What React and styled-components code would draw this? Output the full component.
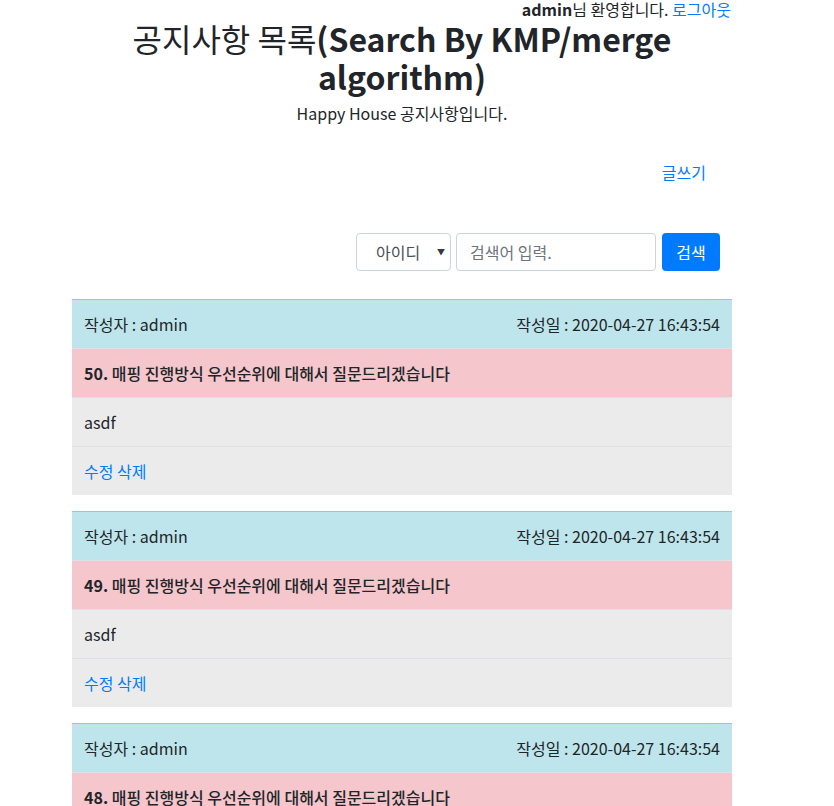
import styled, { createGlobalStyle } from "styled-components";

const GlobalStyle = createGlobalStyle`
  body {
    margin: 0;
    font-family: "Noto Sans CJK KR", "Noto Sans", sans-serif;
    font-size: 16px;
    line-height: 1.5;
    color: #212529;
    background: #ffffff;
  }
`;

const notices = [50, 49, 48];

const App = () => {
  return (
    <>
      <GlobalStyle />
      <Container>
        <TopBar>
          <b>admin</b>님 환영합니다. <Link href="#">로그아웃</Link>
        </TopBar>
        <Title>
          공지사항 목록<span>(Search By KMP/merge algorithm)</span>
        </Title>
        <Lead>Happy House 공지사항입니다.</Lead>
        <WriteRow>
          <Link href="#">글쓰기</Link>
        </WriteRow>
        <SearchForm>
          <Select>
            <span>아이디</span>
            <span className="arrow">▼</span>
          </Select>
          <Input placeholder="검색어 입력." />
          <Button>검색</Button>
        </SearchForm>
        {notices.map((no) => (
          <Table key={no}>
            <Row tone="info" first>
              <span>작성자 : admin</span>
              <span>작성일 : 2020-04-27 16:43:54</span>
            </Row>
            <Row tone="danger">
              <strong>
                <b>{no}.</b> 매핑 진행방식 우선순위에 대해서 질문드리겠습니다
              </strong>
            </Row>
            <Row tone="gray">asdf</Row>
            <Row tone="gray">
              <span>
                <Link href="#">수정</Link> <Link href="#">삭제</Link>
              </span>
            </Row>
          </Table>
        ))}
      </Container>
    </>
  );
};

export default App;

const Container = styled.div`
  width: 660px;
  margin-left: 72px;
`;

const TopBar = styled.div`
  text-align: right;
  line-height: 18px;
  padding-right: 1px;

  b {
    font-weight: 700;
  }
`;

const Link = styled.a`
  color: #007bff;
  text-decoration: none;
`;

const Title = styled.h2`
  margin: 1px 0 6px;
  font-size: 32px;
  font-weight: 400;
  line-height: 38px;
  text-align: center;
  padding: 0 60px;

  span {
    font-weight: 700;
  }
`;

const Lead = styled.p`
  margin: 0;
  text-align: center;
  font-size: 16px;
  line-height: 24px;
`;

const WriteRow = styled.div`
  display: flex;
  justify-content: flex-end;
  padding: 35px 26px 0 0;
  line-height: 24px;
`;

const SearchForm = styled.div`
  display: flex;
  justify-content: flex-end;
  gap: 5px;
  margin-top: 49px;
  padding-right: 12px;
`;

const Select = styled.div`
  box-sizing: border-box;
  width: 95px;
  height: 38px;
  display: flex;
  align-items: center;
  justify-content: space-between;
  padding: 0 5px 0 19px;
  border: 1px solid #ced4da;
  border-radius: 4px;
  color: #495057;

  .arrow {
    font-size: 8px;
    color: #343a40;
  }
`;

const Input = styled.input`
  box-sizing: border-box;
  width: 200px;
  height: 38px;
  padding: 0 13px;
  border: 1px solid #ced4da;
  border-radius: 4px;
  font: inherit;
  color: #495057;
  outline: none;

  &::placeholder {
    color: #6c757d;
  }
`;

const Button = styled.button`
  box-sizing: border-box;
  width: 58px;
  height: 38px;
  margin-left: 1px;
  border: none;
  border-radius: 4px;
  background: #007bff;
  color: #ffffff;
  font: inherit;
`;

const Table = styled.div`
  margin-top: 28px;
  margin-bottom: -12px;
`;

const tones = {
  info: "#bee5eb",
  danger: "#f5c6cb",
  gray: "#ebebeb",
};

const Row = styled.div`
  display: flex;
  justify-content: space-between;
  padding: 12px;
  line-height: 24px;
  background: ${(props) => tones[props.tone]};
  border-top: 1px solid ${(props) => (props.first ? "#86cfda" : "#dee2e6")};

  strong {
    font-weight: 500;
  }

  b {
    font-weight: 700;
  }
`;
